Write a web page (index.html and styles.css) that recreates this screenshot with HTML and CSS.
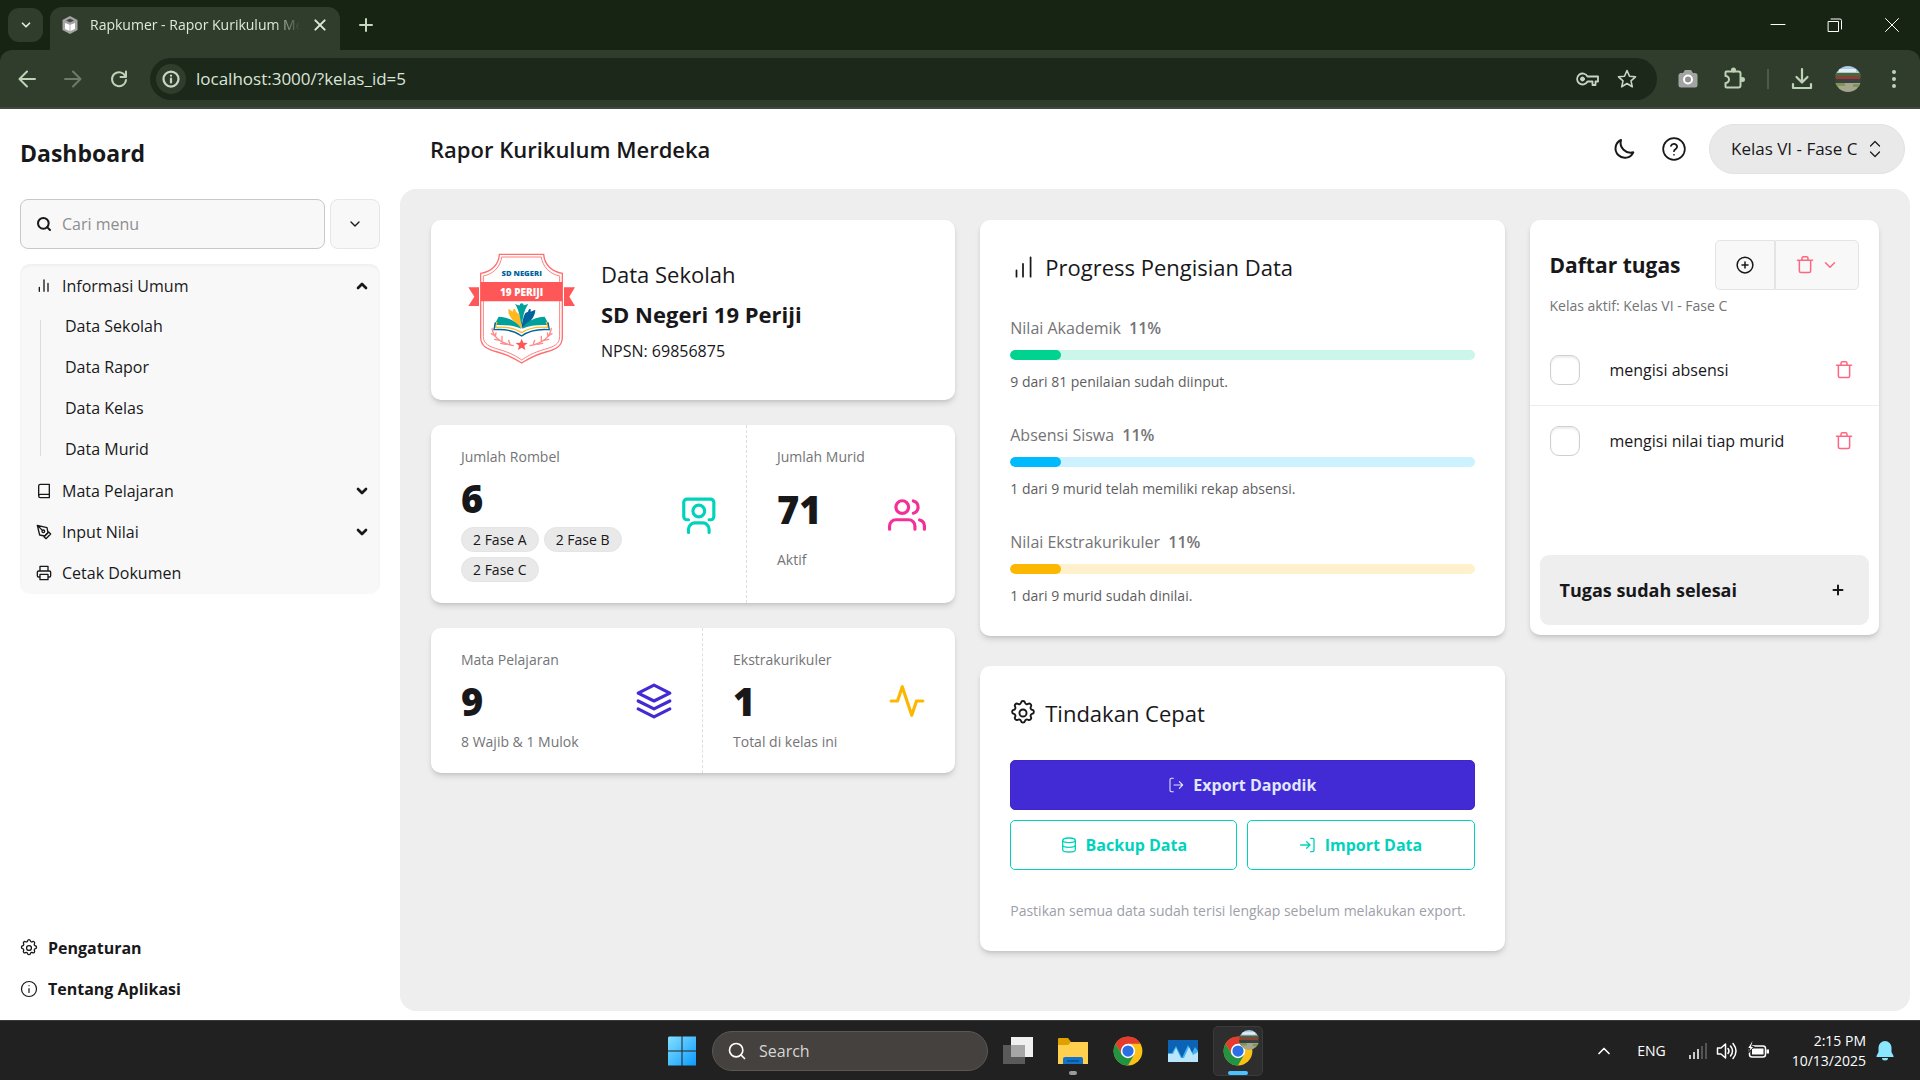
FILE: index.html
```html
<!DOCTYPE html>
<html lang="id">
<head>
<meta charset="utf-8">
<meta name="viewport" content="width=device-width, initial-scale=1">
<title>Rapkumer - Rapor Kurikulum Merdeka</title>
<link rel="stylesheet" href="styles.css">
</head>
<body>
<svg class="sprite" aria-hidden="true">
  <symbol id="chev-down" viewBox="0 0 24 24"><path d="m6 9 6 6 6-6"/></symbol>
  <symbol id="chev-up" viewBox="0 0 24 24"><path d="m6 15 6-6 6 6"/></symbol>
  <symbol id="search" viewBox="0 0 24 24"><circle cx="11" cy="11" r="8"/><path d="m21 21-4.3-4.3"/></symbol>
  <symbol id="bars" viewBox="0 0 24 24"><path d="M18 20V8M12 20V3M5 20v-6"/></symbol>
  <symbol id="bars-asc" viewBox="0 0 24 24"><path d="M19 21V3M12 21V9M6 21v-6"/></symbol>
  <symbol id="book" viewBox="0 0 24 24"><path d="M4 19.5A2.5 2.5 0 0 1 6.500 17H20M6.500 2H20v20H6.500A2.500 2.500 0 0 1 4 19.500v-15A2.500 2.500 0 0 1 6.500 2z"/></symbol>
  <symbol id="pen" viewBox="0 0 24 24"><path d="m12 19 7-7 3 3-7 7-3-3z"/><path d="m18 13-1.500-7.500L2 2l3.500 14.500L13 18l5-5zM2 2l7.586 7.586"/><circle cx="11" cy="11" r="2"/></symbol>
  <symbol id="printer" viewBox="0 0 24 24"><path d="M6 9V2h12v7M6 18H4a2 2 0 0 1-2-2v-5a2 2 0 0 1 2-2h16a2 2 0 0 1 2 2v5a2 2 0 0 1-2 2h-2M6 14h12v8H6z"/></symbol>
  <symbol id="gear" viewBox="1 1 22 22"><circle cx="12" cy="12" r="3"/><path d="M10.300 3.200a1.750 1.750 0 0 1 3.400 0 1.720 1.720 0 0 0 2.570 1.070 1.750 1.750 0 0 1 2.400 2.400 1.720 1.720 0 0 0 1.060 2.600 1.750 1.750 0 0 1 0 3.460 1.720 1.720 0 0 0-1.060 2.570 1.750 1.750 0 0 1-2.400 2.400 1.720 1.720 0 0 0-2.570 1.060 1.750 1.750 0 0 1-3.400 0 1.720 1.720 0 0 0-2.570-1.060 1.750 1.750 0 0 1-2.400-2.400 1.720 1.720 0 0 0-1.070-2.570 1.750 1.750 0 0 1 0-3.460A1.720 1.720 0 0 0 5.330 6.700a1.750 1.750 0 0 1 2.400-2.400 1.720 1.720 0 0 0 2.570-1.100z"/></symbol>
  <symbol id="info" viewBox="0 0 24 24"><circle cx="12" cy="12" r="10"/><path d="M12 16.500V11.500M12 7.500h.01"/></symbol>
  <symbol id="moon" viewBox="0 0 24 24"><path d="M9 3a9.300 9.300 0 1 0 12.300 12.300A10 10 0 0 1 9 3z"/></symbol>
  <symbol id="help" viewBox="0 0 24 24"><circle cx="12" cy="12" r="10"/><path d="M9.100 9.200a3 3 0 0 1 5.800.8c0 2-2.900 2.400-2.900 4M12 17.300h.01"/></symbol>
  <symbol id="updown" viewBox="0 0 24 24"><path d="m6 8 6-6 6 6M6 16l6 6 6-6"/></symbol>
  <symbol id="board-user" viewBox="0 0 24 24"><path d="M6 23v-2a4 4 0 0 1 4-4h5a4 4 0 0 1 4 4v2M6 15H5a2 2 0 0 1-2-2V4a2 2 0 0 1 2-2h15a2 2 0 0 1 2 2v9a2 2 0 0 1-2 2h-1"/><circle cx="12.500" cy="9.500" r="3.700"/></symbol>
  <symbol id="users" viewBox="0 0 24 24"><path d="M17 21v-2a4 4 0 0 0-4-4H5a4 4 0 0 0-4 4v2M23 21v-2a4 4 0 0 0-3-3.870M16 3.130a4 4 0 0 1 0 7.750"/><circle cx="9" cy="7" r="4"/></symbol>
  <symbol id="layers" viewBox="0 0 24 24"><path d="M12 2 2 7l10 5 10-5-10-5zM2 17l10 5 10-5M2 12l10 5 10-5"/></symbol>
  <symbol id="pulse" viewBox="0 0 24 24"><path d="M22 12h-4l-3 9L9 3l-3 9H2"/></symbol>
  <symbol id="exit" viewBox="0 0 24 24"><path d="M8 2H5a2 2 0 0 0-2 2v16a2 2 0 0 0 2 2h3M17 17l5-5-5-5M22 12H9"/></symbol>
  <symbol id="enter" viewBox="0 0 24 24"><path d="M16 2h3a2 2 0 0 1 2 2v16a2 2 0 0 1-2 2h-3M10 17l5-5-5-5M15 12H1"/></symbol>
  <symbol id="db" viewBox="0 0 24 24"><ellipse cx="12" cy="5" rx="9.500" ry="3.500"/><path d="M2.500 5v14c0 2 4.200 3.500 9.500 3.500s9.500-1.500 9.500-3.500V5M2.500 12c0 2 4.200 3.500 9.500 3.500s9.500-1.500 9.500-3.500"/></symbol>
  <symbol id="plus-circle" viewBox="0 0 24 24"><circle cx="12" cy="12" r="10.500"/><path d="M12 8v8M8 12h8"/></symbol>
  <symbol id="trash" viewBox="0 0 24 24"><path d="M2 5.500h20M4.500 5.500V20a2 2 0 0 0 2 2h11a2 2 0 0 0 2-2V5.500M8 5.500V3a2 2 0 0 1 2-2h4a2 2 0 0 1 2 2v2.500"/></symbol>
  <symbol id="x" viewBox="0 0 24 24"><path d="M5 5l14 14M19 5 5 19"/></symbol>
  <symbol id="plus" viewBox="0 0 24 24"><path d="M12 3v18M3 12h18"/></symbol>
  <symbol id="photo" viewBox="0 0 26 26"><clipPath id="round"><circle cx="13" cy="13" r="13"/></clipPath><g clip-path="url(#round)" stroke="none"><path fill="#a9cbe6" d="M0 0h26v9H0z"/><path fill="#e4edf2" d="M4 3h17v3H4z"/><path fill="#4c6638" d="M0 7h26v5H0z"/><path fill="#8b3f38" d="M1 10h24v3H1z"/><path fill="#3b4140" d="M0 13h26v4H0z"/><path fill="#a3a68b" d="M0 17h26v9H0z"/><path fill="#7f9455" d="M0 17h10v3H0zM18 18h8v3h-8z"/></g></symbol>
  <symbol id="chrome" viewBox="0 0 48 48"><g stroke="none"><circle cx="24" cy="24" r="23" fill="#fbc116"/><path fill="#e33b2e" d="M24 12.500h19.920A23 23 0 0 0 4.080 12.500L14.040 29.750z"/><path fill="#229342" d="M4.080 12.500A23 23 0 0 0 24 47l9.960-17.250L24 35.500l-9.960-5.750z"/><circle cx="24" cy="24" r="11.500" fill="#fff"/><circle cx="24" cy="24" r="9" fill="#2b6fe6"/></g></symbol>
</svg>

<header class="browser">
  <div class="tabstrip">
    <button class="tab-search" aria-label="Search tabs"><svg class="ic w14 heavy"><use href="#chev-down"/></svg></button>
    <div class="tab">
      <svg class="favicon" viewBox="0 0 16 18" aria-hidden="true"><path fill="#a5a5a5" d="M8 0l7.500 4v10L8 18 .500 14V4z"/><path fill="#4b4b4b" d="M8 2.500l4 2-4 2-4-2z"/><path fill="#fff" d="M3 7l4.600 1.800V15L3 13zM13 7 8.400 8.800V15L13 13z"/></svg>
      <span class="tab-title">Rapkumer - Rapor Kurikulum Merdeka</span>
      <button class="bare" aria-label="Close tab"><svg class="ic w16 heavy"><use href="#x"/></svg></button>
    </div>
    <button class="bare new-tab" aria-label="New tab"><svg class="ic w16 heavy"><use href="#plus"/></svg></button>
    <div class="window-buttons">
      <button class="bare" aria-label="Minimize"><svg class="ic w14" viewBox="0 0 14 14"><path d="M0 6.500h14"/></svg></button>
      <button class="bare" aria-label="Restore"><svg class="ic w14" viewBox="0 0 14 14"><path d="M.5 3.500h10v10H.5zM3 1h9a1.500 1.500 0 0 1 1.500 1.500V11"/></svg></button>
      <button class="bare" aria-label="Close"><svg class="ic w14" viewBox="0 0 14 14"><path d="M.5.5l13 13M13.500.5l-13 13"/></svg></button>
    </div>
  </div>
  <div class="toolbar">
    <button class="bare nav-btn" aria-label="Back"><svg class="ic w20 mid" viewBox="0 0 20 20"><path d="M18 10H3M10 2.500 2.500 10l7.500 7.500"/></svg></button>
    <button class="bare nav-btn faded" aria-label="Forward"><svg class="ic w20 mid" viewBox="0 0 20 20"><path d="M2 10h15M10 2.500l7.500 7.500-7.500 7.500"/></svg></button>
    <button class="bare nav-btn" aria-label="Reload"><svg class="ic w20 mid" viewBox="0 0 20 20"><path d="M16.500 7.500A7 7 0 1 0 17 11M17 2.500v5.500h-5.500"/></svg></button>
    <div class="omnibox">
      <button class="site-info" aria-label="Site information"><svg class="ic w18 heavy"><use href="#info"/></svg></button>
      <input class="url" type="text" aria-label="Address" value="localhost:3000/?kelas_id=5">
      <button class="bare" aria-label="Passwords"><svg class="ic w24" viewBox="0 0 24 24"><path stroke-width="1.800" d="M12.500 9.500a5.500 5.500 0 1 0 0 5h5V18h3v-3.500H23v-5z"/><circle cx="7.500" cy="12" r="2" fill="currentColor"/></svg></button>
      <button class="bare" aria-label="Bookmark"><svg class="ic w20" viewBox="0 0 20 20"><path stroke-width="1.600" d="m10 1.500 2.500 5.800 6 .5-4.500 4 1.300 6-5.300-3.300-5.300 3.300 1.300-6-4.500-4 6-.5z"/></svg></button>
    </div>
    <div class="tools">
      <button class="bare" aria-label="Screenshot"><svg class="w20" viewBox="0 0 20 20"><path fill="#a3a3a3" d="M2 4h3l2-3h6l2 3h2a2.500 2.500 0 0 1 2.500 2.500V16A2.500 2.500 0 0 1 17 18.500H3A2.500 2.500 0 0 1 .500 16V6z"/><circle cx="10" cy="10.500" r="4" fill="#8d918c" stroke="#fff" stroke-width="2"/></svg></button>
      <button class="bare" aria-label="Extensions"><svg class="ic w22 mid" viewBox="0 0 22 22"><path d="M3.500 3.500h12a2 2 0 0 1 2 2v12a2 2 0 0 1-2 2h-12a1 1 0 0 1-1-1v-3.500a3.500 3.500 0 0 0 0-7V4.500a1 1 0 0 1 1-1z"/><circle cx="10.500" cy="2" r="1.500" fill="currentColor"/><circle cx="19.500" cy="11.500" r="1.500" fill="currentColor"/></svg></button>
      <span class="tool-sep"></span>
      <button class="bare" aria-label="Downloads"><svg class="ic w22" viewBox="0 0 22 22"><path stroke-width="2.200" d="M11 1v13M5.500 9l5.500 5.500L16.500 9M2 16v4h18v-4"/></svg></button>
      <button class="bare" aria-label="Profile"><svg class="w26"><use href="#photo"/></svg></button>
      <button class="bare" aria-label="Menu"><svg class="w18" viewBox="0 0 18 18"><g fill="#bdd3b5"><circle cx="9" cy="2" r="2"/><circle cx="9" cy="9" r="2"/><circle cx="9" cy="16" r="2"/></g></svg></button>
    </div>
  </div>
</header>

<div class="app">
  <aside class="sidebar">
    <h1 class="brand">Dashboard</h1>
    <div class="finder">
      <label class="search-box"><svg class="ic w16 heavy"><use href="#search"/></svg><input type="search" placeholder="Cari menu" aria-label="Cari menu"></label>
      <button class="finder-toggle" aria-label="Buka menu"><svg class="ic w16 mid"><use href="#chev-down"/></svg></button>
    </div>
    <nav class="menu">
      <button class="menu-row"><svg class="ic w16 mid"><use href="#bars"/></svg><span>Informasi Umum</span><svg class="ic w16 bold"><use href="#chev-up"/></svg></button>
      <div class="submenu">
        <a href="#sekolah">Data Sekolah</a>
        <a href="#rapor">Data Rapor</a>
        <a href="#kelas">Data Kelas</a>
        <a href="#murid">Data Murid</a>
      </div>
      <button class="menu-row"><svg class="ic w16 mid"><use href="#book"/></svg><span>Mata Pelajaran</span><svg class="ic w16 bold"><use href="#chev-down"/></svg></button>
      <button class="menu-row"><svg class="ic w16 mid"><use href="#pen"/></svg><span>Input Nilai</span><svg class="ic w16 bold"><use href="#chev-down"/></svg></button>
      <a class="menu-row" href="#cetak"><svg class="ic w16 mid"><use href="#printer"/></svg><span>Cetak Dokumen</span></a>
    </nav>
    <nav class="side-foot">
      <a href="#pengaturan"><svg class="ic w18 soft"><use href="#gear"/></svg>Pengaturan</a>
      <a href="#tentang"><svg class="ic w18 soft"><use href="#info"/></svg>Tentang Aplikasi</a>
    </nav>
  </aside>

  <div class="workspace">
    <div class="topbar">
      <h2 class="topbar-title">Rapor Kurikulum Merdeka</h2>
      <button class="bare" aria-label="Mode gelap"><svg class="ic w24 mid"><use href="#moon"/></svg></button>
      <button class="bare" aria-label="Bantuan"><svg class="ic w26 soft"><use href="#help"/></svg></button>
      <label class="class-picker"><select aria-label="Kelas"><option>Kelas VI - Fase C</option></select><svg class="ic w18 soft"><use href="#updown"/></svg></label>
    </div>

    <main class="board">
      <div class="stack">
        <section class="card school">
          <svg class="crest" viewBox="33 33 360 360" role="img" aria-label="Logo sekolah">
            <path d="M148 46H281C283 76 305 98 337 103V295C337 322 318 331 288 339C250 349 228 364 215 372C202 364 180 349 142 339C112 331 92 322 92 295V103C125 98 147 76 148 46Z" fill="#fff" stroke="#ff6f6f" stroke-width="4"/>
            <path d="M155 54H274C278 84 300 105 329 111V293C329 315 312 323 284 331C248 341 228 354 215 363C202 354 182 341 146 331C118 323 100 315 100 293V111C130 105 151 84 155 54Z" fill="none" stroke="#ff8080" stroke-width="3"/>
            <path fill="#ff5757" d="M92 129H337V187H92zM55 145H87V201H55L73 173zM342 145H375L358 173L375 201H342z"/>
            <text class="crest-top" x="215" y="112">SD NEGERI</text>
            <text class="crest-band" x="215" y="170">19 PERIJI</text>
            <path fill="#ffb81f" d="M215 268C180 240 172 225 176 209L188 218C190 205 196 208 198 218L206 224C214 240 215 255 215 268z"/>
            <path fill="#00639e" d="M215 268C216 248 220 232 226 222L234 218C238 205 244 208 242 218L256 212C256 232 240 252 215 268z"/>
            <path fill="#00a19a" d="M195 194C205 201 222 201 235 194C226 210 220 220 215 262C208 222 204 208 195 194z"/><circle cx="215" cy="199" r="6" fill="#00a19a"/>
            <path fill="#00a19a" d="M146 233C175 234 202 248 214 269C190 258 166 257 133 258zM284 233C255 234 228 248 216 269C240 258 264 257 297 258z"/>
            <g fill="none" stroke-width="4"><path stroke="#ffb81f" d="M141 249L136 265C170 262 196 268 215 281C234 268 260 262 294 265L289 249"/><path stroke="#00639e" d="M136 250L132 272C170 269 196 277 215 291C234 277 260 269 298 272L294 250"/></g>
            <path fill="#ff5757" d="M215 299l5 12 13 1-10 8 3 13-11-7-11 7 3-13-10-8 13-1z"/>
            <g fill="none" stroke="#ff8a8a" stroke-width="4" stroke-linecap="round"><path d="M126 268q6 40 64 52M304 268q-6 40-64 52"/><path d="M124 284l10 6M134 301l14 3M152 313l16 3M138 282l-2 10M156 292l0 14M176 304l4 12M306 284l-10 6M296 301l-14 3M278 313l-16 3M292 282l2 10M274 292l0 14M254 304l-4 12"/></g>
          </svg>
          <div class="school-text">
            <h3 class="card-title">Data Sekolah</h3>
            <p class="school-name">SD Negeri 19 Periji</p>
            <p class="school-id">NPSN: 69856875</p>
          </div>
        </section>

        <section class="card stats stats-class">
          <div class="stat">
            <div class="stat-body">
              <span class="label">Jumlah Rombel</span>
              <strong class="figure">6</strong>
              <div class="badges"><span>2 Fase A</span><span>2 Fase B</span><span>2 Fase C</span></div>
            </div>
            <svg class="ic w38 mid teal"><use href="#board-user"/></svg>
          </div>
          <div class="stat">
            <div class="stat-body spread">
              <span class="label">Jumlah Murid</span>
              <strong class="figure">71</strong>
              <span class="label">Aktif</span>
            </div>
            <svg class="ic w38 mid pink"><use href="#users"/></svg>
          </div>
        </section>

        <section class="card stats stats-subject">
          <div class="stat">
            <div class="stat-body">
              <span class="label">Mata Pelajaran</span>
              <strong class="figure">9</strong>
              <span class="label">8 Wajib &amp; 1 Mulok</span>
            </div>
            <svg class="ic w38 mid indigo"><use href="#layers"/></svg>
          </div>
          <div class="stat">
            <div class="stat-body">
              <span class="label">Ekstrakurikuler</span>
              <strong class="figure">1</strong>
              <span class="label">Total di kelas ini</span>
            </div>
            <svg class="ic w38 mid amber"><use href="#pulse"/></svg>
          </div>
        </section>
      </div>

      <div class="stack loose">
        <section class="card panel">
          <h3 class="card-title with-icon"><svg class="ic w26 soft"><use href="#bars-asc"/></svg>Progress Pengisian Data</h3>
          <div class="meters">
            <div class="meter green"><label for="m1">Nilai Akademik <b>11%</b></label><progress id="m1" max="100" value="11"></progress><p>9 dari 81 penilaian sudah diinput.</p></div>
            <div class="meter blue"><label for="m2">Absensi Siswa <b>11%</b></label><progress id="m2" max="100" value="11"></progress><p>1 dari 9 murid telah memiliki rekap absensi.</p></div>
            <div class="meter yellow"><label for="m3">Nilai Ekstrakurikuler <b>11%</b></label><progress id="m3" max="100" value="11"></progress><p>1 dari 9 murid sudah dinilai.</p></div>
          </div>
        </section>
        <section class="card panel">
          <h3 class="card-title with-icon"><svg class="ic w26 soft"><use href="#gear"/></svg>Tindakan Cepat</h3>
          <div class="actions">
            <button class="btn primary"><svg class="ic w16 soft"><use href="#exit"/></svg>Export Dapodik</button>
            <button class="btn outline"><svg class="ic w16 mid"><use href="#db"/></svg>Backup Data</button>
            <button class="btn outline"><svg class="ic w16 mid"><use href="#enter"/></svg>Import Data</button>
          </div>
          <p class="note">Pastikan semua data sudah terisi lengkap sebelum melakukan export.</p>
        </section>
      </div>

      <section class="card tasks">
        <div class="tasks-head">
          <h3>Daftar tugas</h3>
          <div class="join">
            <button aria-label="Tambah tugas"><svg class="ic w18 mid"><use href="#plus-circle"/></svg></button>
            <button class="danger" aria-label="Hapus tugas"><svg class="ic w18 mid"><use href="#trash"/></svg><svg class="ic w18 mid"><use href="#chev-down"/></svg></button>
          </div>
        </div>
        <p class="label tasks-sub">Kelas aktif: Kelas VI - Fase C</p>
        <ul class="task-list">
          <li><input type="checkbox" id="t1"><label for="t1">mengisi absensi</label><button class="bare danger" aria-label="Hapus"><svg class="ic w18 mid"><use href="#trash"/></svg></button></li>
          <li><input type="checkbox" id="t2"><label for="t2">mengisi nilai tiap murid</label><button class="bare danger" aria-label="Hapus"><svg class="ic w18 mid"><use href="#trash"/></svg></button></li>
        </ul>
        <button class="done"><span>Tugas sudah selesai</span><svg class="ic w12 bold"><use href="#plus"/></svg></button>
      </section>
    </main>
  </div>
</div>

<footer class="taskbar">
  <div class="dock">
    <button class="dock-btn" aria-label="Start"><svg class="w30" viewBox="0 0 30 30"><defs><linearGradient id="win" x1="0" y1="0" x2="1" y2="1"><stop offset="0" stop-color="#83e0ff"/><stop offset="1" stop-color="#0c9bff"/></linearGradient></defs><path fill="url(#win)" d="M2 0.500h12.500v14H1V1.500zM15.500.5H29v14H15.500zM1 15.500h13.500v14H1zM15.500 15.500H29v14H15.500z"/></svg></button>
    <label class="dock-search"><svg class="ic w20 mid"><use href="#search"/></svg><input type="search" placeholder="Search" aria-label="Search"></label>
    <button class="dock-btn" aria-label="Task view"><svg class="w30" viewBox="0 0 30 30"><path fill="#5a5a5a" d="M0 9h22v19H0z"/><path fill="#f0f0f0" d="M8 1h22v20H8z"/><path fill="#a6a6a6" d="M8 9h14v12H8z"/></svg></button>
    <button class="dock-btn running" aria-label="File Explorer"><svg class="w30" viewBox="0 0 30 30"><path fill="#e0a100" d="M0 3a1 1 0 0 1 1-1h9l3 4h16v8H0z"/><path fill="#ffd04e" d="M0 9h10l3-3h17v22H0z"/><path fill="#1273c8" d="M5 28v-5a2 2 0 0 1 2-2h16a2 2 0 0 1 2 2v5z"/><path stroke="#0a4e96" stroke-width="1.500" d="M9 25h12"/></svg></button>
    <button class="dock-btn" aria-label="Chrome"><svg class="w30"><use href="#chrome"/></svg></button>
    <button class="dock-btn" aria-label="Monitor"><svg class="w30" viewBox="0 0 30 30"><path fill="#0c62b5" d="M0 4h30v22H0z"/><path fill="#3fb2f0" d="M0 17 4 17 8 10l6 12 6-13 4 8 3-6 3 4v11H0z"/><path fill="#b9e6fd" d="M0 26v-8h5l3-6 5 10 3 0 5-11 4 8 5-3v10z"/></svg></button>
    <button class="dock-btn running active" aria-label="Chrome, active"><svg class="w30"><use href="#chrome"/></svg><svg class="dock-avatar"><use href="#photo"/></svg></button>
  </div>
  <div class="tray">
    <button class="bare" aria-label="Hidden icons"><svg class="ic w20 mid"><use href="#chev-up"/></svg></button>
    <span class="lang">ENG</span>
    <div class="tray-icons">
      <svg class="w18" viewBox="0 0 18 18" aria-hidden="true"><path stroke="#fff" stroke-width="1.500" d="M1 17v-4M5 17v-7M9 17V7"/><path stroke="#666" stroke-width="1.500" d="M13 17V4M17 17V1"/></svg>
      <svg class="ic w22" viewBox="0 0 22 22" aria-hidden="true"><path stroke-width="1.500" d="M1.500 8v6H5l4.500 4V4L5 8zM12 8.500q2 2.500 0 5M14.500 6q4 5 0 10M17 3.500q6 7.500 0 15"/></svg>
      <svg class="ic w22" viewBox="0 0 22 22" aria-hidden="true"><rect x="2.500" y="6" width="16" height="11" rx="2.500" stroke-width="1.500"/><path fill="#fff" stroke="none" d="M5 8.500h11.500v6H5zM19.500 9.500H22v4h-2.500z"/><path fill="#fff" stroke="#222" stroke-width="1" d="M5 1 .5 8.500H3L1.500 13 7 6.500H4.500L6 1z"/></svg>
    </div>
    <div class="clock"><span>2:15 PM</span><span>10/13/2025</span></div>
    <svg class="w20" viewBox="0 0 20 20" aria-hidden="true"><path fill="#8ae7ff" d="M10 0a6.500 6.500 0 0 0-6.500 6.500V11L1.500 15v1h17v-1l-2-4V6.500A6.500 6.500 0 0 0 10 0zM7 17h6a3 2.500 0 0 1-6 0z"/></svg>
  </div>
</footer>
</body>
</html>
```
FILE: styles.css
```css
* { box-sizing: border-box; }

body {
  margin: 0;
  min-height: 100vh;
  display: flex;
  flex-direction: column;
  font-family: "Open Sans", "Noto Sans", sans-serif;
  font-size: 16px;
  line-height: 24px;
  color: #18181b;
  background: #fff;
}

h1, h2, h3, p, ul { margin: 0; padding: 0; }
button, input, select { font: inherit; color: inherit; }
button { cursor: pointer; }
a { color: inherit; text-decoration: none; }
svg { flex: none; display: block; overflow: visible; }

.sprite { position: absolute; width: 0; height: 0; }
.bare { display: flex; align-items: center; justify-content: center; padding: 0; border: 0; background: none; }

/* icons */
.ic { fill: none; stroke: currentColor; stroke-width: 1; stroke-linecap: round; stroke-linejoin: round; }
.soft { stroke-width: 1.6; }
.mid { stroke-width: 2; }
.heavy { stroke-width: 3; }
.bold { stroke-width: 4; }
.w12 { width: 12px; height: 12px; }
.w14 { width: 14px; height: 14px; }
.w16 { width: 16px; height: 16px; }
.w18 { width: 18px; height: 18px; }
.w20 { width: 20px; height: 20px; }
.w22 { width: 22px; height: 22px; }
.w24 { width: 24px; height: 24px; }
.w26 { width: 26px; height: 26px; }
.w30 { width: 30px; height: 30px; }
.w38 { width: 38px; height: 38px; }
.teal { color: #00d3bb; }
.pink { color: #f43098; }
.indigo { color: #422ad5; }
.amber { color: #fcb700; }

/* browser frame */
.browser { background: #172313; color: #dfe8da; }
.tabstrip { display: flex; align-items: flex-end; height: 50px; padding-left: 8px; }
.tab-search {
  width: 35px; height: 34px; margin: 0 7px 8px 0; padding: 0;
  display: flex; align-items: center; justify-content: center;
  border: 0; border-radius: 11px; background: #303d2d;
}
.tab {
  display: flex; align-items: center; gap: 12px;
  width: 290px; height: 43px; padding: 0 12px 7px;
  border-radius: 12px 12px 0 0; background: #303d2d;
}
.favicon { width: 16px; height: 18px; }
.tab-title {
  flex: 1; overflow: hidden; white-space: nowrap;
  font-size: 14px;
  mask-image: linear-gradient(90deg, #000 88%, transparent);
}
.new-tab { margin-left: 18px; height: 50px; color: #c5d8bd; }
.window-buttons { display: flex; margin-left: auto; color: #fff; }
.window-buttons .bare { width: 57px; height: 50px; }
.toolbar {
  display: flex; align-items: center; height: 59px; padding: 0 13px 0 4px;
  background: #303d2d; border-bottom: 2px solid #3e4a3c; border-radius: 12px 12px 0 0;
  color: #bdd3b5;
}
.nav-btn { width: 46px; height: 42px; }
.faded { color: #6d7b69; }
.omnibox {
  flex: 1; display: flex; align-items: center; gap: 18px;
  height: 42px; margin-left: 8px; padding: 0 20px 0 6px;
  border-radius: 21px; background: #1c281a; color: #c9d3c6;
}
.site-info {
  width: 30px; height: 30px; padding: 0; border: 0; border-radius: 15px;
  display: flex; align-items: center; justify-content: center;
  background: #303d2d;
}
.url { flex: 1; min-width: 0; margin-left: -8px; padding: 0; border: 0; outline: 0; background: none; font-size: 17px; color: #dbe4d8; }
.tools { display: flex; align-items: center; gap: 20px; padding-left: 18px; }
.tools .bare { width: 26px; height: 26px; }
.tool-sep { width: 2px; height: 20px; background: #4d5b49; }

/* application shell */
.app { flex: 1; display: flex; }
.sidebar { flex: none; width: 400px; padding: 24px 20px 11px; display: flex; flex-direction: column; }
.brand { font-size: 23px; line-height: 40px; font-weight: 700; }
.finder { display: flex; gap: 5px; margin-top: 26px; }
.search-box {
  flex: 1; display: flex; align-items: center; gap: 10px; height: 50px; padding: 0 15px;
  border: 1px solid #c8c8c9; border-radius: 8px; background: #f8f8f8;
}
.search-box input { flex: 1; min-width: 0; padding: 0; border: 0; outline: 0; background: none; }
.search-box input::placeholder { color: #8e8e90; opacity: 1; }
.finder-toggle {
  width: 50px; height: 50px; padding: 0; display: flex; align-items: center; justify-content: center;
  border: 1px solid #e6e6e6; border-radius: 8px; background: #f8f8f8;
}
.menu { margin-top: 15px; padding: 1px 0; border-radius: 10px; background: #f8f8f8; box-shadow: inset 0 2px 3px rgba(0, 0, 0, .04); }
.menu-row {
  display: flex; align-items: center; gap: 10px; width: 100%; height: 41px; padding: 0 10px 0 16px;
  border: 0; background: none; text-align: left;
}
.menu-row span { flex: 1; }
.submenu { position: relative; padding-left: 45px; }
.submenu::before { content: ""; position: absolute; left: 20px; top: 14px; bottom: 14px; width: 1px; background: #dcdcdc; }
.submenu a { display: block; line-height: 41px; }
.side-foot { margin-top: auto; }
.side-foot a { display: flex; align-items: center; gap: 10px; height: 41px; font-weight: 700; }

.workspace { flex: 1; min-width: 0; display: flex; flex-direction: column; padding: 0 10px 9px 0; }
.topbar { display: flex; align-items: center; gap: 25px; padding: 15px 5px 15px 30px; }
.topbar-title { flex: 1; font-size: 22px; line-height: 50px; font-weight: 600; }
.class-picker {
  display: flex; align-items: center; gap: 8px; height: 50px; margin-left: -3px; padding: 0 20px 0 21px;
  border: 1px solid #e2e2e2; border-radius: 25px; background: #e9e9e9;
}
.class-picker select { appearance: none; padding: 0; border: 0; outline: 0; background: none; font-size: 17px; font-weight: 500; }

.board {
  flex: 1; display: grid; grid-template-columns: 3fr 3fr 2fr; align-items: start; gap: 25px;
  padding: 31px; border-radius: 16px; background: #eee;
}
.stack { display: flex; flex-direction: column; gap: 25px; min-width: 0; }
.loose { gap: 30px; }
.card { border-radius: 10px; background: #fff; box-shadow: 0 4px 6px -1px rgba(0, 0, 0, .14), 0 2px 4px -2px rgba(0, 0, 0, .12); }
.card-title { font-size: 22px; line-height: 30px; font-weight: 500; }

.school { display: flex; align-items: center; gap: 20px; padding: 30px; }
.crest { width: 120px; height: 120px; }
.crest-top, .crest-band { font-family: "Open Sans", sans-serif; font-weight: 800; text-anchor: middle; }
.crest-top { font-size: 23px; fill: #00639e; }
.crest-band { font-size: 30px; fill: #fff; }
.school-text { padding-top: 2px; }
.school-name { margin-top: 10px; font-size: 22px; line-height: 30px; font-weight: 700; }
.school-id { margin-top: 10px; }

.stats { display: grid; }
.stats-class { grid-template-columns: 315px 1fr; }
.stats-subject { grid-template-columns: 271px 1fr; }
.stat { display: flex; align-items: center; justify-content: space-between; padding: 20px 29px 19px 30px; }
.stat + .stat { border-left: 1px dashed #dedede; }
.stat-body { display: flex; flex-direction: column; align-self: stretch; }
.spread { justify-content: space-between; padding-bottom: 12px; }
.label { font-size: 14px; line-height: 24px; color: #747476; }
.figure { padding: 5px 0; font-size: 38px; line-height: 48px; font-weight: 800; }
.badges { display: flex; flex-wrap: wrap; gap: 5px; width: 180px; padding-bottom: 2px; }
.badges span { padding: 0 11px; border: 1px solid #e4e4e4; border-radius: 13px; background: #e9e9e9; font-size: 14px; line-height: 23px; }

.panel { padding: 30px 30px 28px; }
.with-icon { display: flex; align-items: center; gap: 9px; line-height: 34px; }
.meters { display: grid; gap: 29px; margin-top: 32px; }
.meter label { display: block; color: #747476; line-height: 24px; }
.meter b { margin-left: 4px; font-weight: 600; }
.meter p { margin-top: 10px; font-size: 14px; color: #5d5d60; }
.meter progress {
  appearance: none; display: block; width: 100%; height: 10px; margin-top: 10px;
  border: 0; border-radius: 5px; overflow: hidden; background: var(--track);
}
.meter progress::-webkit-progress-bar { background: var(--track); }
.meter progress::-webkit-progress-value { border-radius: 5px; background: var(--fill); }
.green { --fill: #00d390; --track: #ccf6e9; }
.blue { --fill: #00bafe; --track: #ccf1ff; }
.yellow { --fill: #fcb700; --track: #fff1cc; }

.actions { display: grid; grid-template-columns: 1fr 1fr; gap: 10px; margin-top: 30px; }
.btn {
  display: flex; align-items: center; justify-content: center; gap: 9px; height: 50px;
  border: 1px solid; border-radius: 5px; font-weight: 700;
}
.primary { grid-column: 1 / -1; border-color: #3d27c8; background: #422ad5; color: #e0e7ff; }
.outline { border-color: #00d3bb; background: #fff; color: #00d3bb; }
.note { margin-top: 29px; font-size: 14px; color: #9d9fa9; }

.tasks { padding: 20px 10px 10px; }
.tasks-head { display: flex; align-items: center; justify-content: space-between; padding: 0 10px; }
.tasks-head h3 { font-size: 21px; line-height: 50px; font-weight: 700; }
.join { display: flex; }
.join button {
  display: flex; align-items: center; justify-content: center; gap: 7px; height: 50px; width: 60px; padding: 0;
  border: 1px solid #e4e4e4; border-radius: 5px 0 0 5px; background: #f8f8f8;
}
.join .danger { width: 84px; border-radius: 0 5px 5px 0; }
.danger { color: #ff6680; }
.tasks-sub { padding: 4px 10px 0; }
.task-list { min-height: 220px; margin: 17px -10px 0; list-style: none; }
.task-list li { display: flex; align-items: center; padding: 20px; }
.task-list li + li { border-top: 1px solid #ededed; }
.task-list input {
  appearance: none; width: 30px; height: 30px; margin: 0;
  border: 1px solid #cfcfd0; border-radius: 9px; box-shadow: inset 0 2px 2px rgba(0, 0, 0, .07);
}
.task-list label { flex: 1; padding-left: 30px; }
.task-list .bare { width: 30px; }
.done {
  display: flex; align-items: center; justify-content: space-between; width: 100%; height: 70px; padding: 0 25px 0 20px;
  border: 0; border-radius: 9px; background: #eee; font-size: 18px; font-weight: 700;
}

/* desktop taskbar */
.taskbar {
  display: grid; grid-template-columns: 1fr auto 1fr; align-items: center; height: 60px;
  border-top: 1px solid #3a3c3a; background: #212121; color: #fff;
}
.dock { grid-column: 2; display: flex; align-items: center; gap: 5px; }
.dock-btn {
  position: relative; width: 50px; height: 50px; padding: 0;
  display: flex; align-items: center; justify-content: center;
  border: 1px solid transparent; border-radius: 5px; background: none;
}
.dock-search {
  display: flex; align-items: center; gap: 12px; width: 276px; height: 40px; padding: 0 14px;
  border: 1px solid #5a5754; border-radius: 20px; background: #44413e;
}
.dock-search input { flex: 1; min-width: 0; padding: 0; border: 0; outline: 0; background: none; }
.dock-search input::placeholder { color: #d6d6d6; opacity: 1; }
.running::after { content: ""; position: absolute; bottom: 0; width: 8px; height: 4px; border-radius: 2px; background: #9b9b9b; }
.active { border-color: #3b3b3b; background: #2e2e2e; }
.active::after { width: 20px; background: #4cc2ff; }
.dock-avatar { position: absolute; top: 3px; right: 3px; width: 20px; height: 20px; }
.tray { display: flex; align-items: center; justify-content: flex-end; gap: 23px; padding-right: 25px; font-size: 14px; }
.tray-icons { display: flex; align-items: center; gap: 9px; }
.clock { display: flex; flex-direction: column; text-align: right; line-height: 20px; }
.tray > .clock + svg { margin-left: -14px; }
```
